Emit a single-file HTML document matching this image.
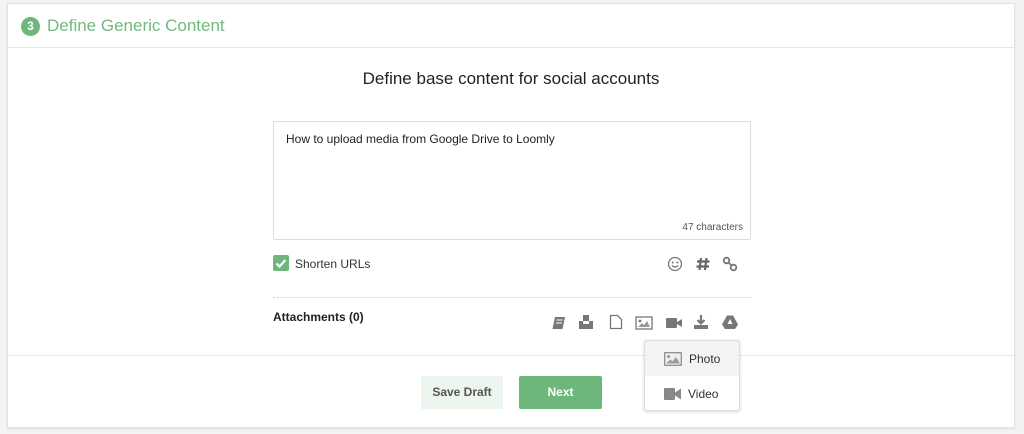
<!DOCTYPE html>
<html><head><meta charset="utf-8"><style>
*{box-sizing:border-box;margin:0;padding:0}
body{width:1024px;height:434px;background:#f3f3f3;font-family:"Liberation Sans",sans-serif;position:relative;overflow:hidden;color:#333}
.card{position:absolute;left:7px;top:3px;width:1008px;height:425px;background:#fff;border:1px solid #e2e2e2;box-shadow:0 1px 2px rgba(0,0,0,.08)}
.hdr{position:absolute;left:0;top:0;width:100%;height:44px;border-bottom:1px solid #e8e8e8}
.num{position:absolute;left:13px;top:13px;width:19px;height:19px;border-radius:50%;background:#6db77a;color:#fff;font-size:12px;font-weight:bold;text-align:center;line-height:19px}
.ttl{position:absolute;left:39px;top:12px;color:#72b97e;font-size:17px}
.h2{position:absolute;left:0;width:100%;top:65px;text-align:center;font-size:17px;color:#222}
.ta{position:absolute;left:265px;top:117px;width:478px;height:119px;border:1px solid #ddd;border-radius:2px}
.ta .t{position:absolute;left:12px;top:10px;font-size:12px;color:#222}
.ta .c{position:absolute;right:7px;bottom:6px;font-size:10px;color:#555}
.chk{position:absolute;left:265px;top:251px;width:16px;height:16px;background:#6db77a;border-radius:2px}
.lbl{position:absolute;left:287px;top:253px;font-size:12px;color:#333}
.sep{position:absolute;left:265px;top:293px;width:478px;border-top:1px dotted #ccc}
.att{position:absolute;left:265px;top:306px;font-size:12px;font-weight:bold;color:#222}
.ftl{position:absolute;left:0;top:351px;width:100%;border-top:1px solid #e8e8e8}
.btn{position:absolute;top:372px;height:33px;font-size:12px;font-weight:bold;text-align:center;line-height:33px}
.sd{left:413px;width:82px;background:#edf5ef;color:#555}
.nx{left:511px;width:83px;background:#6db77a;color:#fff;border-radius:2px}
.dd{position:absolute;left:636px;top:336px;width:96px;height:71px;background:#fff;border:1px solid #ddd;box-shadow:0 1px 3px rgba(0,0,0,.15);border-radius:2px}
.dd .a{position:absolute;left:0;top:0;width:100%;height:35px;background:#f3f3f3}
.dd span{position:absolute;font-size:12px;color:#333}
svg{position:absolute}
</style></head><body>
<div class="card">
<div class="hdr"><div class="num">3</div><div class="ttl">Define Generic Content</div></div>
<div class="h2">Define base content for social accounts</div>
<div class="ta"><div class="t">How to upload media from Google Drive to Loomly</div><div class="c">47 characters</div></div>
<div class="chk"><svg width="16" height="16" style="left:0;top:0"><path d="M3.5 8.5l3 3 6-6.5" stroke="#fff" stroke-width="2.2" fill="none"/></svg></div>
<div class="lbl">Shorten URLs</div>
<svg width="16" height="16" style="left:659px;top:252px"><circle cx="8" cy="8" r="6.5" stroke="#777" stroke-width="1.3" fill="none"/><circle cx="5.7" cy="6.5" r="1" fill="#777"/><circle cx="10.3" cy="6.5" r="1" fill="#777"/><path d="M4.8 9.5q3.2 3 6.4 0" stroke="#777" stroke-width="1.2" fill="none"/></svg>
<svg width="16" height="16" style="left:687px;top:252px"><path d="M6 2L4.5 14M11.5 2L10 14M2 5.5h12.5M1.5 10.5h12.5" stroke="#666" stroke-width="2.2"/></svg>
<svg width="16" height="16" style="left:714px;top:252px"><circle cx="4.5" cy="4.5" r="2.8" stroke="#777" stroke-width="1.8" fill="none"/><circle cx="11.5" cy="11.5" r="2.8" stroke="#777" stroke-width="1.8" fill="none"/><path d="M6.5 6.5l3 3" stroke="#777" stroke-width="1.8"/></svg>
<div class="sep"></div>
<div class="att">Attachments (0)</div>
<svg width="16" height="16" style="left:543px;top:311px"><path d="M4 2h10l-2.5 12H1.5z" fill="#777"/><path d="M5.5 5h6M5 8h6" stroke="#fff" stroke-width="1"/></svg>
<svg width="16" height="16" style="left:570px;top:310px"><rect x="5" y="1" width="6" height="6" fill="#777"/><rect x="1" y="7" width="14" height="8" fill="#777"/><rect x="5" y="7" width="6" height="3" fill="#fff"/></svg>
<svg width="16" height="16" style="left:600px;top:310px"><path d="M2.5 1.5h7l4 4v9h-11z" stroke="#777" stroke-width="1.3" fill="none"/></svg>
<svg width="18" height="16" style="left:627px;top:311px"><rect x="1" y="2" width="16" height="12" stroke="#777" stroke-width="1.3" fill="none"/><circle cx="5" cy="6" r="1.4" fill="#777"/><path d="M3 12l4-4 2 2 3-4 3 6z" fill="#999"/></svg>
<svg width="18" height="16" style="left:657px;top:311px"><rect x="1" y="3" width="11" height="10" rx="1" fill="#777"/><path d="M12 7l5-3v8l-5-3z" fill="#777"/></svg>
<svg width="16" height="16" style="left:685px;top:310px"><path d="M8 1v8M4.5 6L8 9.5 11.5 6" stroke="#777" stroke-width="2.2" fill="none"/><rect x="1" y="11" width="14" height="4" fill="#777"/></svg>
<svg width="18" height="16" style="left:713px;top:310px"><path d="M6 1.5h6l5 9-3 4.5H4L1 10.5z" fill="#777"/><path d="M9 5l2.5 5h-5z" fill="#fff"/></svg>
<div class="ftl"></div>
<div class="btn sd">Save Draft</div>
<div class="btn nx">Next</div>
<div class="dd"><div class="a"></div>
<svg width="18" height="14" style="left:19px;top:11px"><rect x="0.7" y="0.7" width="16.6" height="12.6" stroke="#888" stroke-width="1.2" fill="#eee"/><circle cx="4.5" cy="4.5" r="1.4" fill="#888"/><path d="M2 11.5l4.5-4 2 2 3.5-4.5 4 6.5z" fill="#999"/></svg>
<span style="left:44px;top:11px">Photo</span>
<svg width="18" height="14" style="left:19px;top:46px"><rect x="0" y="1" width="11" height="12" rx="1" fill="#888"/><path d="M11 5.5l6-4v11l-6-4z" fill="#888"/></svg>
<span style="left:43px;top:46px">Video</span>
</div>
</div>
</body></html>
